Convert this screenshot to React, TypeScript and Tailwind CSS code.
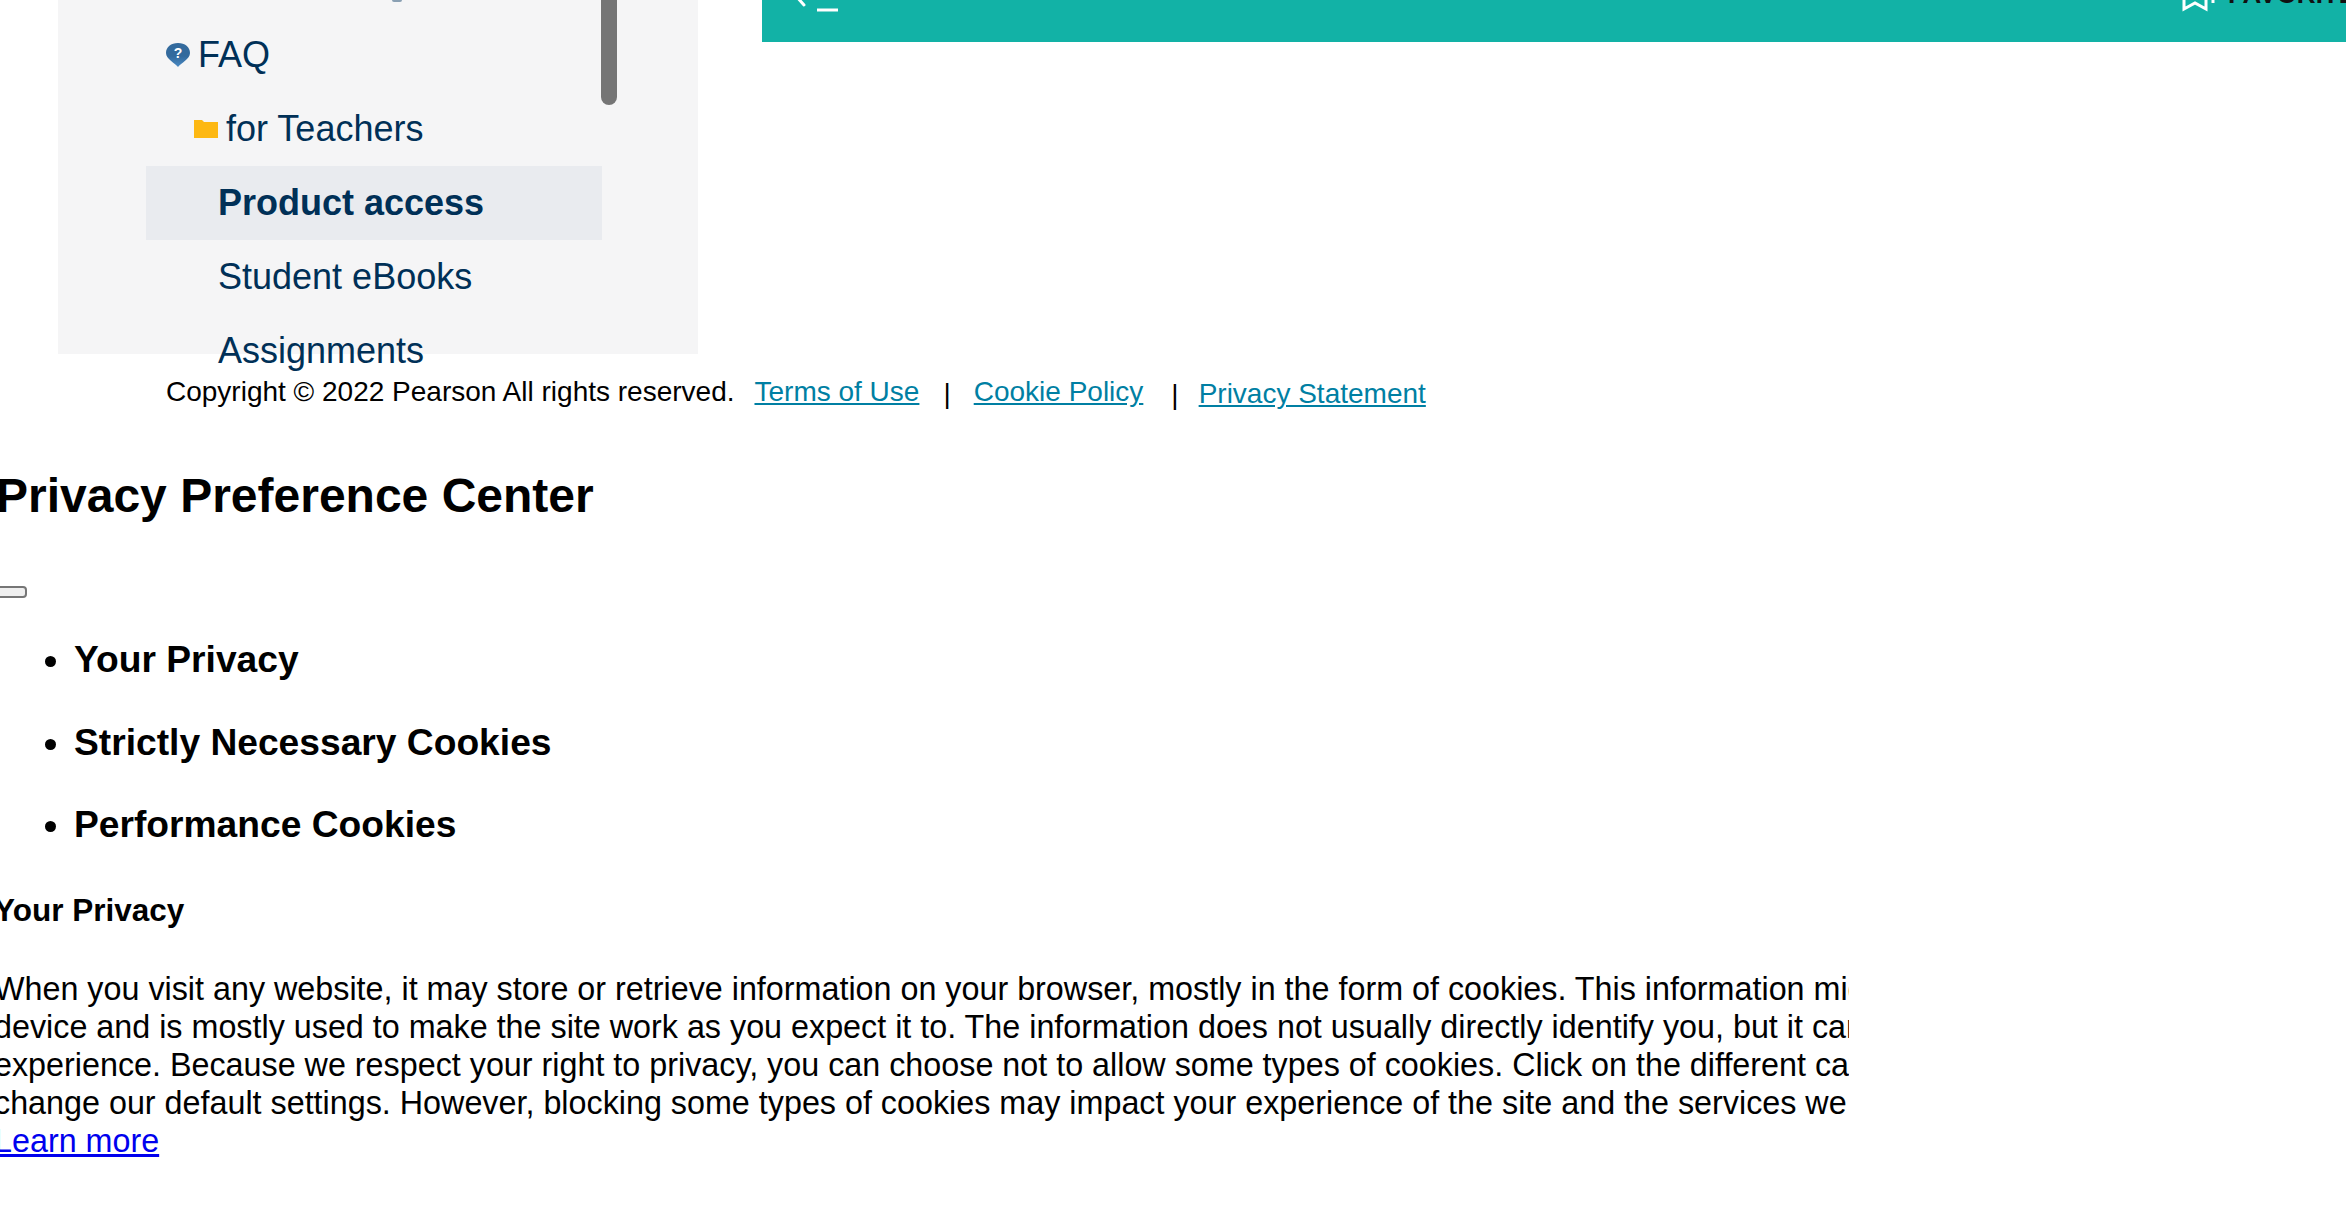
const navy = "text-[#003057]";

function SideItem({ label, bold, active }: { label: string; bold?: boolean; active?: boolean }) {
  return (
    <div className={`h-[74px] pl-[72px] flex items-center text-[36px] whitespace-nowrap ${navy} ${active ? "bg-[#e9ebef]" : ""} ${bold ? "font-bold" : ""}`}>
      {label}
    </div>
  );
}

function Sidebar() {
  return (
    <aside className="relative w-[640px] h-[354px] ml-[58px] shrink-0 bg-[#f5f5f6] pt-[18px] pl-[88px]">
      {/* tail of the row scrolled away above */}
      <div className="absolute left-[334px] top-0 w-[10px] h-[2px] rounded-b-full bg-[#8aa0b3]" />
      <div className={`w-[456px] h-[74px] flex items-center gap-[8px] pl-[20px] text-[36px] ${navy}`}>
        <svg width="24" height="24" viewBox="0 0 24 24" className="shrink-0">
          <defs>
            <linearGradient id="pin" x1="0" y1="0" x2="0" y2="1">
              <stop offset="0.55" stopColor="#336a9d" />
              <stop offset="1" stopColor="#4a8ac4" />
            </linearGradient>
          </defs>
          <path d="M12 24 C9 20 0 16 0 10 C0 4 5 0 12 0 C19 0 24 4 24 10 C24 16 15 20 12 24Z" fill="url(#pin)" />
          <text x="12" y="15" textAnchor="middle" fontSize="14" fontWeight="700" fill="#fff" fontFamily="Liberation Sans">?</text>
        </svg>
        FAQ
      </div>
      <div className={`w-[456px] h-[74px] flex items-center gap-[8px] pl-[48px] text-[36px] ${navy}`}>
        <svg width="24" height="18" viewBox="0 0 24 18" className="shrink-0">
          <path d="M0 0 H8 L10 2 H24 V18 H0Z" fill="#fdb813" />
        </svg>
        for Teachers
      </div>
      <div className="w-[456px]">
        <SideItem label="Product access" bold active />
        <SideItem label="Student eBooks" />
        <SideItem label="Assignments" />
      </div>
      <div className="absolute left-[543px] top-0 w-[16px] h-[105px] rounded-b-lg bg-[#757575]" />
    </aside>
  );
}

function TealBar() {
  return (
    <div className="relative ml-[64px] flex-1 h-[42px] bg-[#12b2a6] overflow-hidden">
      <svg width="60" height="14" viewBox="0 0 60 14" className="absolute left-[34px] top-0" fill="none" stroke="#fff" strokeWidth="3">
        <path d="M0 -4 L8 5" strokeLinecap="round" />
        <path d="M21 10 H42" />
      </svg>
      <svg width="34" height="14" viewBox="0 0 34 14" className="absolute left-[1420px] top-0" fill="none" stroke="#fff" strokeWidth="3">
        <path d="M2 -10 V9 L13 3 L24 9 V-10" />
        <path d="M31 -4 V3" />
      </svg>
      <span className="absolute left-[1466px] top-[-21px] text-[26px] leading-[30px] font-bold text-[#111] whitespace-nowrap">FAVORITES</span>
    </div>
  );
}

export default function App() {
  return (
    <div className="h-screen overflow-hidden bg-white text-black" style={{ fontFamily: '"Liberation Sans", Arial, sans-serif' }}>
      <div className="flex items-start h-[354px]">
        <Sidebar />
        <TealBar />
      </div>

      <footer className="flex items-start h-[76px] ml-[166px] pt-[17px] text-[28px] whitespace-nowrap">
        <span>Copyright © 2022 Pearson All rights reserved.</span>
        <a className="ml-[20px] text-[#007fa3] underline">Terms of Use</a>
        <span className="ml-[24px] mt-[2px]">|</span>
        <a className="ml-[23px] text-[#007fa3] underline">Cookie Policy</a>
        <span className="ml-[28px] mt-[3px]">|</span>
        <a className="ml-[20px] mt-[2px] text-[#007fa3] underline">Privacy Statement</a>
      </footer>

      <div className="-ml-[6px] w-[1855px] overflow-hidden">
        <h1 className="ml-[2px] text-[48px] font-bold leading-[56px] mt-[38px]">Privacy Preference Center</h1>
        <div className="ml-[2px] h-[12px] w-[31px] mt-[62px] rounded-[4px] border-2 border-[#767676] bg-[#efefef]" />
        <ul className="list-disc ml-[80px] mt-[40px] text-[37.2px] font-bold">
          <li className="h-[83px] leading-[42px]">Your Privacy</li>
          <li className="h-[82px] leading-[42px]">Strictly Necessary Cookies</li>
          <li className="h-[74px] leading-[42px]">Performance Cookies</li>
        </ul>
        <h3 className="text-[31.5px] font-bold leading-[38px] mt-[14px]">Your Privacy</h3>
        <p className="text-[32.3px] leading-[38px] mt-[41px] whitespace-nowrap">
          When you visit any website, it may store or retrieve information on your browser, mostly in the form of cookies. This information might be about you, your preferences or your<br />
          device and is mostly used to make the site work as you expect it to. The information does not usually directly identify you, but it can give you a more personalized web<br />
          experience. Because we respect your right to privacy, you can choose not to allow some types of cookies. Click on the different category headings to find out more and<br />
          change our default settings. However, blocking some types of cookies may impact your experience of the site and the services we are able to offer.<br />
          <a className="text-[#0000ee] underline">Learn more</a>
        </p>
      </div>
    </div>
  );
}
